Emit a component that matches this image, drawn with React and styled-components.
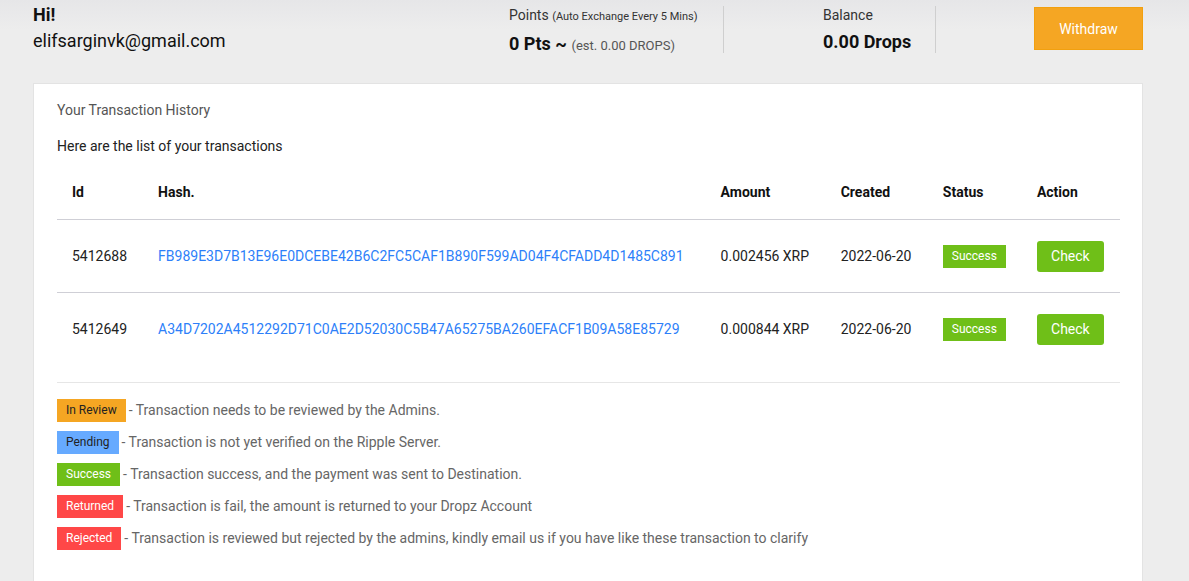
import React from "react";
import styled, { createGlobalStyle } from "styled-components";

const Global = createGlobalStyle`
  html, body { margin: 0; padding: 0; }
  body {
    background: #ededed;
    font-family: Roboto, "Liberation Sans", Arial, sans-serif;
    color: #222;
  }
  * { box-sizing: border-box; }
`;

const Page = styled.div`
  min-height: 581px;
  background: linear-gradient(#e6e6e8 0px, #ededed 30px, #ededed 100%);
  padding: 0 46px 0 33px;
`;

const Header = styled.header`
  height: 83px;
  display: flex;
  align-items: flex-start;
`;

const Greeting = styled.div`
  flex: 1;
  padding-top: 4px;
`;

const Hi = styled.div`
  font-size: 18px;
  font-weight: 700;
  line-height: 21px;
  color: #111;
`;

const Email = styled.div`
  margin-top: 2px;
  font-size: 18px;
  line-height: 28px;
  color: #111;
`;

const Stat = styled.div`
  width: ${(p) => p.$w}px;
  padding-left: ${(p) => p.$pl}px;
  margin-top: 6px;
  height: 47px;
  border-right: 1px solid #cfcfcf;
`;

const StatLabel = styled.div`
  font-size: 14px;
  line-height: 18px;
  color: #333;
  small { font-size: 11px; }
`;

const StatValue = styled.div`
  margin-top: 7px;
  font-size: 18px;
  font-weight: 700;
  line-height: 22px;
  color: #111;
  span { font-size: 13px; font-weight: 400; color: #555; }
`;

const WithdrawButton = styled.button`
  margin-left: 98px;
  margin-top: 7px;
  width: 109px;
  height: 43px;
  background: #f5a623;
  border: 1px solid #f2a00f;
  color: #fff;
  font-family: inherit;
  font-size: 14px;
  cursor: pointer;
`;

const Card = styled.section`
  background: #fff;
  border: 1px solid #e3e3e3;
  border-bottom: none;
  min-height: 498px;
  padding: 16px 22px 20px 23px;
`;

const Title = styled.h2`
  margin: 0;
  font-size: 14px;
  font-weight: 400;
  line-height: 20px;
  color: #555;
`;

const Subtitle = styled.p`
  margin: 16px 0 0;
  font-size: 14px;
  line-height: 20px;
  color: #222;
`;

const Table = styled.table`
  margin-top: 8px;
  width: 100%;
  table-layout: fixed;
  border-collapse: collapse;
  font-size: 14px;
`;

const Th = styled.th`
  text-align: left;
  font-weight: 700;
  color: #111;
  padding: 18px 15px 17px;
  line-height: 20px;
  border-bottom: 1px solid #cfcfd6;
`;

const Tr = styled.tr`
  & + & td { border-top: 1px solid #cfcfd6; }
`;

const Td = styled.td`
  padding: 0 15px;
  height: 73px;
  line-height: 20px;
  color: #222;
  white-space: nowrap;
`;

const HashLink = styled.a`
  color: #2d7ff9;
  text-decoration: none;
`;

const Badge = styled.span`
  display: inline-block;
  height: 23px;
  line-height: 23px;
  padding: 0 9px;
  font-size: 12px;
  font-weight: 400;
  background: ${(p) => p.$bg};
  color: ${(p) => p.$fg};
`;

const CheckButton = styled.button`
  height: 31px;
  width: 67px;
  border: none;
  border-radius: 3px;
  background: #6fbf18;
  color: #fff;
  font-family: inherit;
  font-size: 14px;
  font-weight: 400;
  cursor: pointer;
`;

const Rule = styled.hr`
  margin: 16px 0 0;
  border: none;
  border-top: 1px solid #e6e6e6;
`;

const Legend = styled.ul`
  list-style: none;
  margin: 16px 0 0;
  padding: 0;
  display: flex;
  flex-direction: column;
  gap: 9px;
`;

const LegendItem = styled.li`
  display: flex;
  align-items: center;
  font-size: 14px;
  color: #666;
  line-height: 23px;
`;

const Desc = styled.span`
  margin-left: 3px;
`;

const GREEN = "#6fbf18";

const rows = [
  {
    id: "5412688",
    hash: "FB989E3D7B13E96E0DCEBE42B6C2FC5CAF1B890F599AD04F4CFADD4D1485C891",
    amount: "0.002456 XRP",
    created: "2022-06-20",
  },
  {
    id: "5412649",
    hash: "A34D7202A4512292D71C0AE2D52030C5B47A65275BA260EFACF1B09A58E85729",
    amount: "0.000844 XRP",
    created: "2022-06-20",
  },
];

const legend = [
  { label: "In Review", bg: "#f5a623", fg: "#222", text: "- Transaction needs to be reviewed by the Admins." },
  { label: "Pending", bg: "#66aaff", fg: "#222", text: "- Transaction is not yet verified on the Ripple Server." },
  { label: "Success", bg: GREEN, fg: "#fff", text: "- Transaction success, and the payment was sent to Destination." },
  { label: "Returned", bg: "#ff4747", fg: "#fff", text: "- Transaction is fail, the amount is returned to your Dropz Account" },
  { label: "Rejected", bg: "#ff4747", fg: "#fff", text: "- Transaction is reviewed but rejected by the admins, kindly email us if you have like these transaction to clarify" },
];

export default function App() {
  return (
    <>
      <Global />
      <Page>
        <Header>
          <Greeting>
            <Hi>Hi!</Hi>
            <Email>elifsarginvk@gmail.com</Email>
          </Greeting>
          <Stat $w={215} $pl={0}>
            <StatLabel>
              Points <small>(Auto Exchange Every 5 Mins)</small>
            </StatLabel>
            <StatValue>
              0 Pts ~ <span>(est. 0.00 DROPS)</span>
            </StatValue>
          </Stat>
          <Stat $w={212} $pl={99}>
            <StatLabel>Balance</StatLabel>
            <StatValue>0.00 Drops</StatValue>
          </Stat>
          <WithdrawButton>Withdraw</WithdrawButton>
        </Header>
        <Card>
          <Title>Your Transaction History</Title>
          <Subtitle>Here are the list of your transactions</Subtitle>
          <Table>
            <colgroup>
              <col style={{ width: 86 }} />
              <col style={{ width: 562 }} />
              <col style={{ width: 120 }} />
              <col style={{ width: 102 }} />
              <col style={{ width: 94 }} />
              <col style={{ width: 98 }} />
            </colgroup>
            <thead>
              <tr>
                <Th>Id</Th>
                <Th>Hash.</Th>
                <Th>Amount</Th>
                <Th>Created</Th>
                <Th>Status</Th>
                <Th>Action</Th>
              </tr>
            </thead>
            <tbody>
              {rows.map((r) => (
                <Tr key={r.id}>
                  <Td>{r.id}</Td>
                  <Td>
                    <HashLink href="#">{r.hash}</HashLink>
                  </Td>
                  <Td>{r.amount}</Td>
                  <Td>{r.created}</Td>
                  <Td>
                    <Badge $bg={GREEN} $fg="#fff">Success</Badge>
                  </Td>
                  <Td>
                    <CheckButton>Check</CheckButton>
                  </Td>
                </Tr>
              ))}
            </tbody>
          </Table>
          <Rule />
          <Legend>
            {legend.map((l) => (
              <LegendItem key={l.label}>
                <Badge $bg={l.bg} $fg={l.fg}>{l.label}</Badge>
                <Desc>{l.text}</Desc>
              </LegendItem>
            ))}
          </Legend>
        </Card>
      </Page>
    </>
  );
}
